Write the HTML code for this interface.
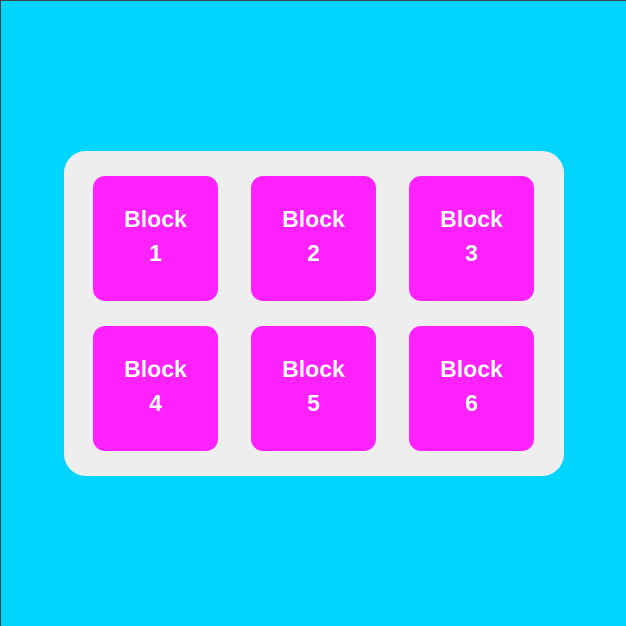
<!DOCTYPE html>
<html><head><style>
html,body{margin:0;padding:0}
body{width:626px;height:626px;background:#00d5ff;position:relative;overflow:hidden}
.l{position:absolute;left:0;top:0;width:1px;height:626px;background:#444}
.t{position:absolute;left:0;top:0;width:626px;height:1px;background:#444}
.c{position:absolute;left:64px;top:151px;width:500px;height:325px;background:#eeeeee;border-radius:22px}
.b{position:absolute;width:125px;height:125px;background:#ff22ff;border-radius:12px;color:#fff;font-family:"Liberation Sans",sans-serif;font-weight:bold;font-size:23px;line-height:34px;display:flex;align-items:center;justify-content:center;text-align:center;padding-bottom:6px;box-sizing:border-box}
</style></head><body>
<div class="l"></div><div class="t"></div>
<div class="c"></div>
<div class="b" style="left:93px;top:176px">Block<br>1</div>
<div class="b" style="left:251px;top:176px">Block<br>2</div>
<div class="b" style="left:409px;top:176px">Block<br>3</div>
<div class="b" style="left:93px;top:326px">Block<br>4</div>
<div class="b" style="left:251px;top:326px">Block<br>5</div>
<div class="b" style="left:409px;top:326px">Block<br>6</div>
</body></html>
